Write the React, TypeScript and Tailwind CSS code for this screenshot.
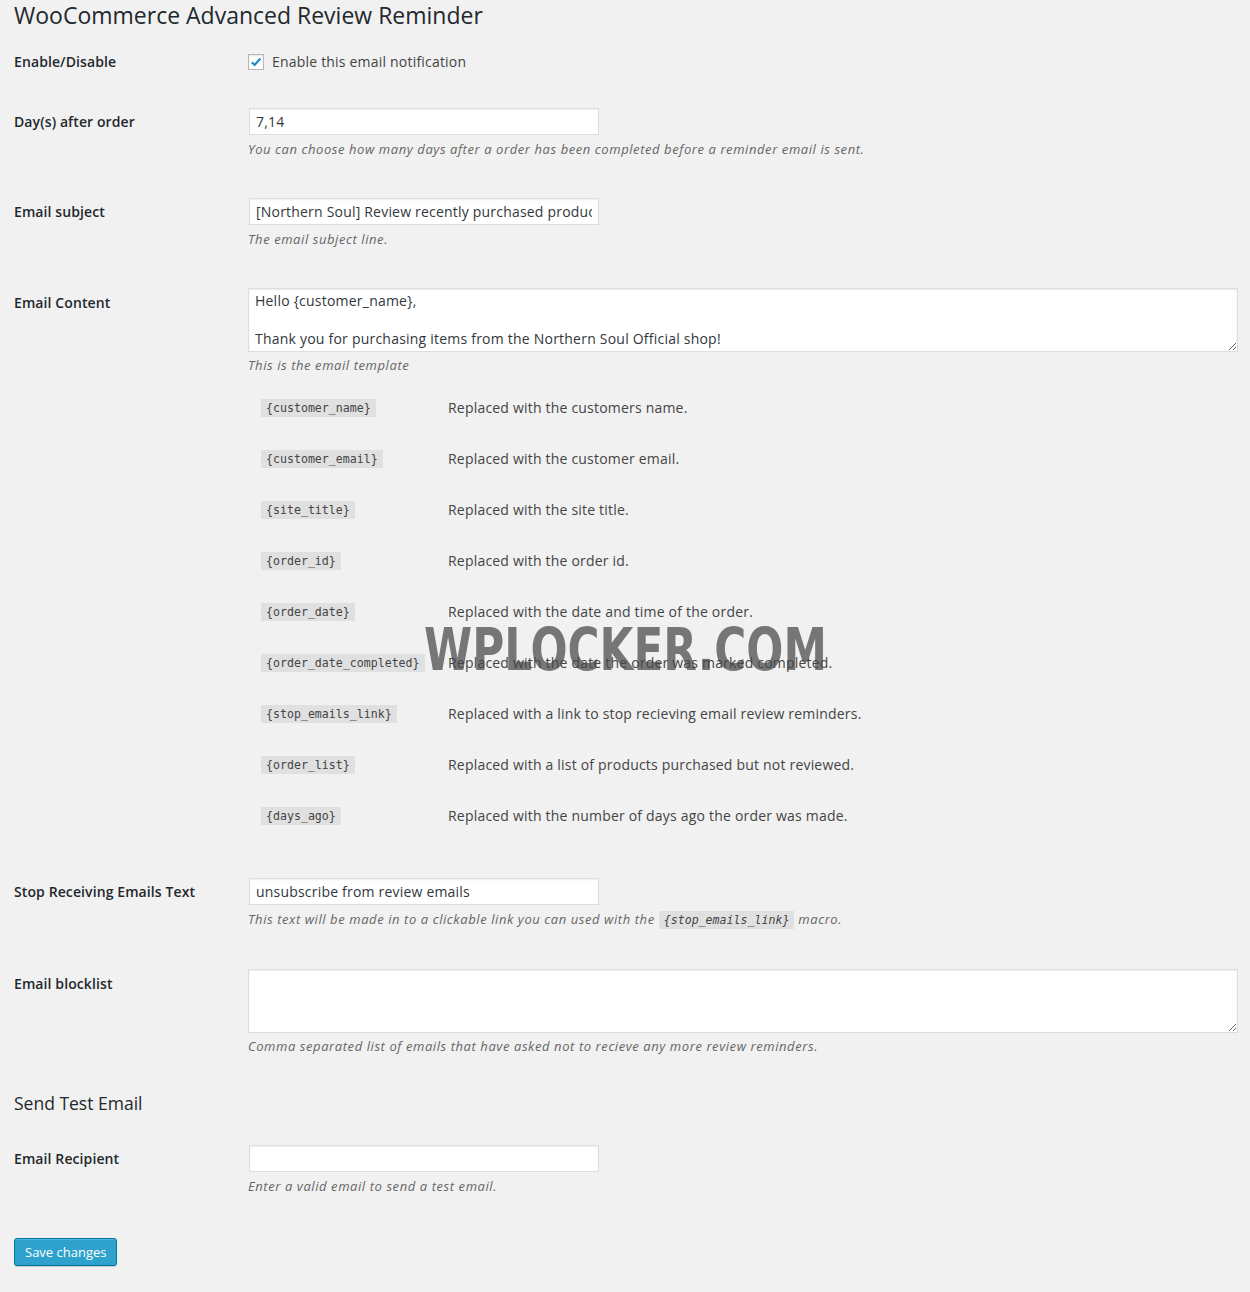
import React from 'react';

const macros: [string, string][] = [
  ['{customer_name}', 'Replaced with the customers name.'],
  ['{customer_email}', 'Replaced with the customer email.'],
  ['{site_title}', 'Replaced with the site title.'],
  ['{order_id}', 'Replaced with the order id.'],
  ['{order_date}', 'Replaced with the date and time of the order.'],
  ['{order_date_completed}', 'Replaced with the date the order was marked completed.'],
  ['{stop_emails_link}', 'Replaced with a link to stop recieving email review reminders.'],
  ['{order_list}', 'Replaced with a list of products purchased but not reviewed.'],
  ['{days_ago}', 'Replaced with the number of days ago the order was made.'],
];

const inputCls =
  'block w-[350px] h-[27px] ml-[1px] bg-white border border-[#ddd] shadow-[inset_0_1px_2px_rgba(0,0,0,0.07)] px-[6px] text-[14px] tracking-[0.2px] text-[#32373c] outline-none';

const textareaCls =
  'block w-full h-[64px] bg-white border border-[#ddd] shadow-[inset_0_1px_2px_rgba(0,0,0,0.07)] px-[6px] pt-[2px] text-[14px] leading-[19px] tracking-[0.22px] text-[#32373c] outline-none';

const Label = ({ children }: { children: React.ReactNode }) => (
  <div className="w-[234px] shrink-0 pt-[20px] text-[14px] leading-[18px] font-semibold tracking-[0.1px] text-[#23282d]">
    {children}
  </div>
);

const Desc = ({ children, className = '' }: { children: React.ReactNode; className?: string }) => (
  <p className={`text-[13px] leading-[18px] italic tracking-[0.58px] text-[#666] ${className}`}>{children}</p>
);

const Code = ({ children, italic }: { children: React.ReactNode; italic?: boolean }) => (
  <code
    className={`inline-block bg-black/[0.07] px-[5px] pt-[3px] pb-[2px] text-[11.6px] leading-[13px] tracking-normal text-[#444] font-['DejaVu_Sans_Mono',monospace] ${
      italic ? 'italic' : ''
    }`}
  >
    {children}
  </code>
);

export default function App() {
  return (
    <div className="relative min-h-screen bg-[#f1f1f1] font-['Open_Sans',sans-serif] text-[13px] text-[#444]">
      <div className="pl-[14px] pr-[12px] pb-[25px]">
        <h2 className="text-[23px] leading-[30px] font-normal text-[#23282d]">
          WooCommerce Advanced Review Reminder
        </h2>

        {/* Enable/Disable */}
        <div className="flex mt-[3px]">
          <Label>Enable/Disable</Label>
          <div className="flex-1 pt-[20px] pb-[22px]">
            <label className="flex items-center gap-[8px] text-[14px] leading-[18px] tracking-[0.2px] text-[#444]">
              <span className="w-[16px] h-[16px] bg-white border border-[#b4b9be] shadow-[inset_0_1px_2px_rgba(0,0,0,0.1)] flex items-center justify-center">
                <svg width="12" height="12" viewBox="0 0 12 12">
                  <path d="M1.8 6.2 L4.6 9 L10.4 2.4" fill="none" stroke="#1e8cbe" strokeWidth="2.2" />
                </svg>
              </span>
              Enable this email notification
            </label>
          </div>
        </div>

        {/* Days after order */}
        <div className="flex">
          <Label>Day(s) after order</Label>
          <div className="flex-1 pt-[15px] pb-[25px]">
            <input className={inputCls} defaultValue="7,14" />
            <Desc className="mt-[5px]">
              You can choose how many days after a order has been completed before a reminder email is sent.
            </Desc>
          </div>
        </div>

        {/* Email subject */}
        <div className="flex">
          <Label>Email subject</Label>
          <div className="flex-1 pt-[15px] pb-[26px]">
            <input className={inputCls} defaultValue="[Northern Soul] Review recently purchased products" />
            <Desc className="mt-[5px]">The email subject line.</Desc>
          </div>
        </div>

        {/* Email content */}
        <div className="flex">
          <Label>Email Content</Label>
          <div className="flex-1 pt-[14px] pb-[22px]">
            <textarea
              className={textareaCls}
              defaultValue={'Hello {customer_name},\n\nThank you for purchasing items from the Northern Soul Official shop!'}
            />
            <Desc className="mt-[4px]">This is the email template</Desc>
            <div className="mt-[8px]">
              {macros.map(([code, text]) => (
                <div key={code} className="flex items-center h-[51px]">
                  <div className="w-[200px] pl-[13px] shrink-0">
                    <Code>{code}</Code>
                  </div>
                  <div className="text-[14px] tracking-[0.2px] text-[#444]">{text}</div>
                </div>
              ))}
            </div>
          </div>
        </div>

        {/* Stop receiving */}
        <div className="flex">
          <Label>Stop Receiving Emails Text</Label>
          <div className="flex-1 pt-[15px] pb-[26px]">
            <input className={inputCls} defaultValue="unsubscribe from review emails" />
            <Desc className="mt-[5px]">
              This text will be made in to a clickable link you can used with the{' '}
              <Code italic>{'{stop_emails_link}'}</Code> macro.
            </Desc>
          </div>
        </div>

        {/* Blocklist */}
        <div className="flex">
          <Label>Email blocklist</Label>
          <div className="flex-1 pt-[14px] pb-[15px]">
            <textarea className={textareaCls} />
            <Desc className="mt-[4px]">
              Comma separated list of emails that have asked not to recieve any more review reminders.
            </Desc>
          </div>
        </div>

        <h3 className="mt-[21px] mb-[15px] text-[17.5px] leading-[24px] font-normal text-[#23282d]">
          Send Test Email
        </h3>

        <div className="flex">
          <Label>Email Recipient</Label>
          <div className="flex-1 pt-[15px] pb-[24px]">
            <input className={inputCls} />
            <Desc className="mt-[5px]">Enter a valid email to send a test email.</Desc>
          </div>
        </div>

        <button className="mt-[19px] h-[28px] px-[10px] rounded-[3px] bg-[#2ea2cc] border border-[#0074a2] text-white text-[13px] leading-[26px] shadow-[inset_0_1px_0_rgba(120,200,230,0.5),0_1px_0_rgba(0,0,0,0.15)]">
          Save changes
        </button>
      </div>

      {/* watermark */}
      <div className="absolute left-[424px] top-[620px] origin-left scale-x-[0.74] font-['DejaVu_Sans',sans-serif] font-bold text-[59px] leading-[60px] text-[rgba(70,70,70,0.72)] pointer-events-none whitespace-nowrap">
        WPLOCKER.COM
      </div>
    </div>
  );
}
